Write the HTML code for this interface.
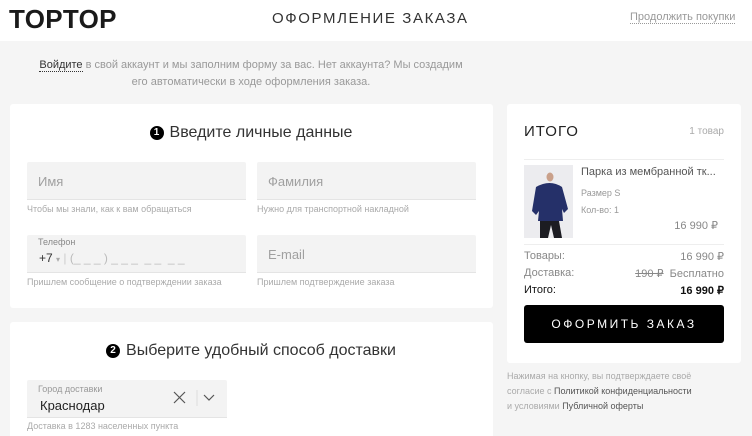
<!DOCTYPE html><html><head><meta charset="utf-8"><style>
*{box-sizing:border-box;margin:0;padding:0}
html,body{width:752px;height:436px;overflow:hidden}
body{background:#f5f5f5;font-family:"Liberation Sans",sans-serif;color:#222;position:relative}
.a{position:absolute;white-space:nowrap}
.hdr{position:absolute;left:0;top:0;width:752px;height:41px;background:#fff}
.card{position:absolute;background:#fff;border-radius:3px}
.fld{position:absolute;background:#f3f3f3;border-bottom:1px solid #e4e4e4;border-radius:2px 2px 0 0}
.ph{color:#a0a0a0;font-size:13px}
.hint{font-size:9px;color:#aaa}
.num{display:inline-block;width:14px;height:14px;border-radius:50%;background:#000;color:#fff;font-size:10px;font-weight:bold;text-align:center;line-height:14px;vertical-align:2px;margin-right:6px}
</style></head><body>
<div class="hdr"></div>
<div class="a" style="left:9px;top:4px;font-size:26px;font-weight:bold;letter-spacing:0.3px;color:#1a1a1a">TOPTOP</div>
<div class="a" style="left:272px;top:10px;font-size:15px;letter-spacing:1.6px;color:#333">ОФОРМЛЕНИЕ ЗАКАЗА</div>
<div class="a" style="left:630px;top:11px;font-size:11px;color:#999;border-bottom:1px dotted #999">Продолжить покупки</div>
<div class="a" style="left:0;width:502px;top:57px;text-align:center;font-size:11px;color:#999;line-height:17px">
<span style="color:#333;border-bottom:1px dotted #333">Войдите</span> в свой аккаунт и мы заполним форму за вас. Нет аккаунта? Мы создадим<br>его автоматически в ходе оформления заказа.</div>

<div class="card" style="left:10px;top:104px;width:483px;height:204px"></div>
<div class="a" style="left:0;width:502px;top:124px;text-align:center;font-size:16px;color:#333"><span class="num">1</span>Введите личные данные</div>
<div class="fld" style="left:27px;top:162px;width:219px;height:38px"></div>
<div class="a ph" style="left:38px;top:174px">Имя</div>
<div class="fld" style="left:257px;top:162px;width:219px;height:38px"></div>
<div class="a ph" style="left:268px;top:174px">Фамилия</div>
<div class="a hint" style="left:27px;top:204px">Чтобы мы знали, как к вам обращаться</div>
<div class="a hint" style="left:257px;top:204px">Нужно для транспортной накладной</div>
<div class="fld" style="left:27px;top:235px;width:219px;height:38px"></div>
<div class="a" style="left:38px;top:237px;font-size:9px;color:#888">Телефон</div>
<div class="a" style="left:39px;top:251px;font-size:12px;color:#333">+7 <span style="color:#aaa;font-size:8px">▾</span> <span style="color:#ccc">|</span> <span style="color:#bbb">(_ _ _ ) _ _ _ &nbsp;_ _ &nbsp;_ _</span></div>
<div class="fld" style="left:257px;top:235px;width:219px;height:38px"></div>
<div class="a ph" style="left:268px;top:247px">E-mail</div>
<div class="a hint" style="left:27px;top:277px">Пришлем сообщение о подтверждении заказа</div>
<div class="a hint" style="left:257px;top:277px">Пришлем подтверждение заказа</div>

<div class="card" style="left:10px;top:322px;width:483px;height:130px"></div>
<div class="a" style="left:0;width:502px;top:342px;text-align:center;font-size:16px;color:#333"><span class="num">2</span>Выберите удобный способ доставки</div>
<div class="fld" style="left:27px;top:380px;width:200px;height:38px"></div>
<div class="a" style="left:38px;top:384px;font-size:9px;color:#999">Город доставки</div>
<div class="a" style="left:40px;top:398px;font-size:13px;color:#222">Краснодар</div>
<svg class="a" style="left:172px;top:390px" width="46" height="16"><path d="M2 2l11 11M13 2L2 13" stroke="#555" stroke-width="1.2" fill="none"/><path d="M25 0v16" stroke="#ddd"/><path d="M32 5l5 5 5-5" stroke="#555" stroke-width="1.2" fill="none"/></svg>
<div class="a hint" style="left:27px;top:421px">Доставка в 1283 населенных пункта</div>

<div class="card" style="left:507px;top:104px;width:234px;height:259px"></div>
<div class="a" style="left:524px;top:123px;font-size:15px;letter-spacing:1px;color:#222">ИТОГО</div>
<div class="a" style="left:524px;width:200px;top:126px;text-align:right;font-size:10px;color:#aaa">1 товар</div>
<div class="a" style="left:524px;top:159px;width:200px;height:1px;background:#eee"></div>
<svg class="a" style="left:524px;top:165px" width="49" height="73"><rect width="49" height="73" fill="#ececef"/><ellipse cx="26" cy="12" rx="3.5" ry="4.5" fill="#c9a08a"/><path d="M12 22q14-8 26 0l6 22-4 4-2-4 1 12H14l1-10-3 4-4-4z" fill="#253069"/><path d="M16 56h19l3 17h-8l-3-13-3 13h-8z" fill="#1c1c22"/></svg>
<div class="a" style="left:581px;top:166px;font-size:11px;color:#555">Парка из мембранной тк...</div>
<div class="a" style="left:581px;top:188px;font-size:9px;color:#999">Размер S</div>
<div class="a" style="left:581px;top:205px;font-size:9px;color:#999">Кол-во: 1</div>
<div class="a" style="left:600px;width:118px;top:219px;text-align:right;font-size:11px;color:#888">16 990 ₽</div>
<div class="a" style="left:524px;top:244px;width:200px;height:1px;background:#eee"></div>
<div class="a" style="left:524px;top:250px;font-size:11px;color:#888">Товары:</div>
<div class="a" style="left:524px;width:200px;top:250px;text-align:right;font-size:11px;color:#888">16 990 ₽</div>
<div class="a" style="left:524px;top:267px;font-size:11px;color:#888">Доставка:</div>
<div class="a" style="left:524px;width:200px;top:267px;text-align:right;font-size:11px;color:#888"><s>190 ₽</s>&nbsp; Бесплатно</div>
<div class="a" style="left:524px;top:284px;font-size:11px;color:#111">Итого:</div>
<div class="a" style="left:524px;width:200px;top:284px;text-align:right;font-size:11px;color:#111;font-weight:bold">16 990 ₽</div>
<div class="a" style="left:524px;top:305px;width:200px;height:38px;background:#000;border-radius:3px;color:#fff;text-align:center;line-height:38px;font-size:12px;letter-spacing:2.5px">ОФОРМИТЬ ЗАКАЗ</div>
<div class="a" style="left:507px;top:369px;font-size:9px;color:#aaa;line-height:15px">Нажимая на кнопку, вы подтверждаете своё<br>согласие с <span style="color:#555">Политикой конфиденциальности</span><br>и условиями <span style="color:#555">Публичной оферты</span></div>
</body></html>
